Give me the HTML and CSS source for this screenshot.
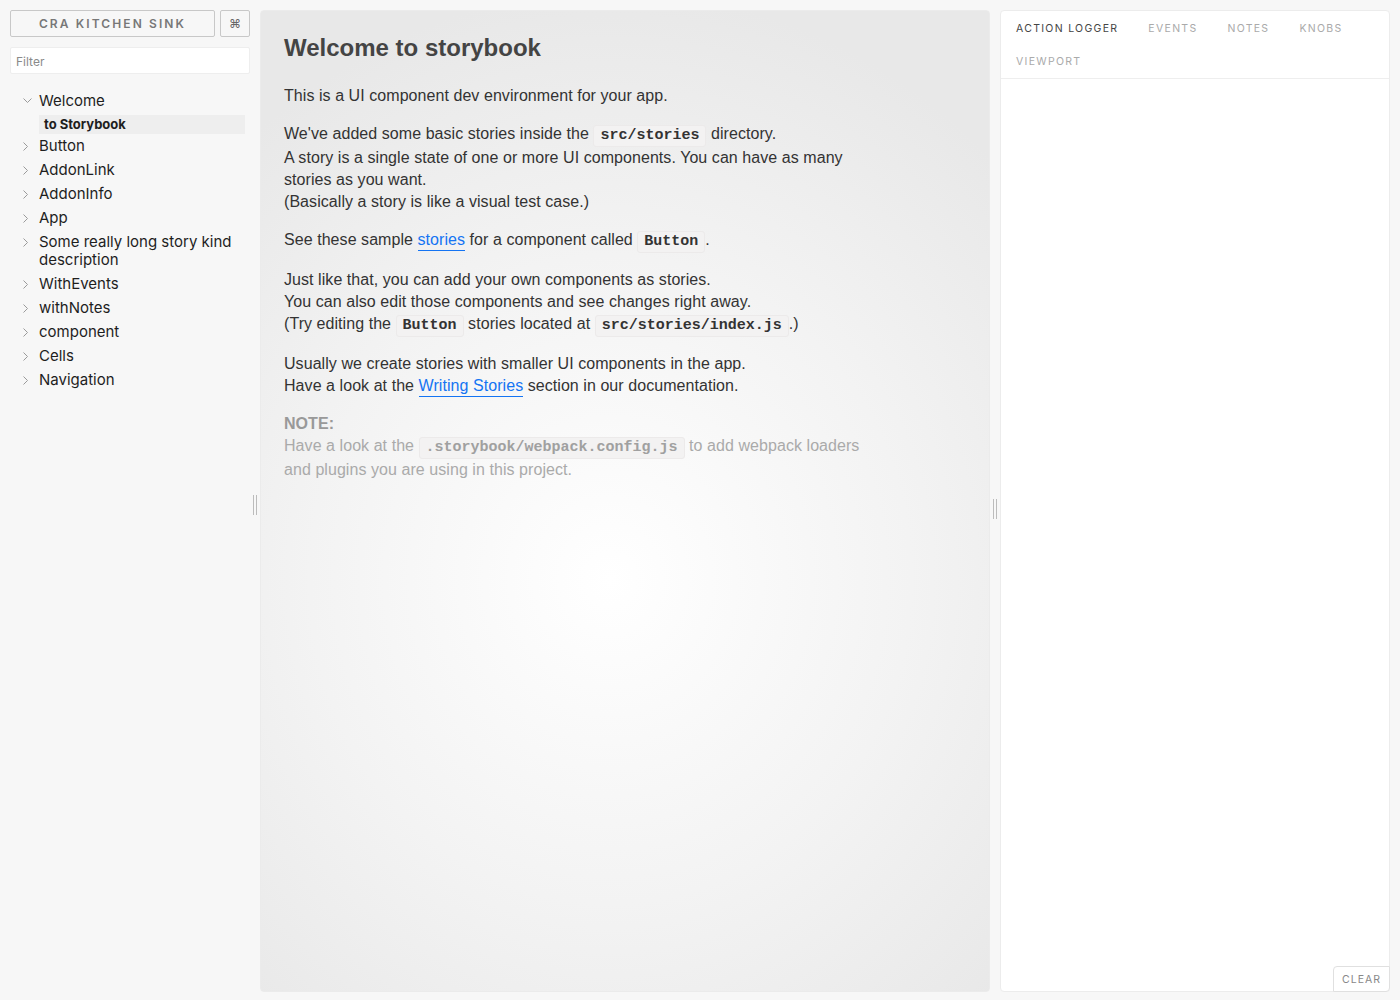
FILE: index.html
```html
<!DOCTYPE html>
<html>
<head>
<meta charset="utf-8">
<title>Storybook</title>
<link rel="stylesheet" href="styles.css">
</head>
<body>
<div class="app">
  <aside class="sidebar">
    <div class="header">
      <button class="brand">CRA KITCHEN SINK</button>
      <button class="shortcut">⌘</button>
    </div>
    <input class="filter" type="text" placeholder="Filter">
    <ul class="tree">
      <li class="kind">
        <div class="row"><span class="chev"><svg width="9" height="6" viewBox="0 0 9 6"><polyline points="0.5,0.5 4.5,4.5 8.5,0.5" fill="none" stroke="#9a9a9a" stroke-width="1"/></svg></span><span class="label">Welcome</span></div>
        <div class="story selected">to Storybook</div>
      </li>
      <li class="kind"><div class="row"><span class="chev"><svg width="6" height="9" viewBox="0 0 6 9"><polyline points="0.5,0.5 4.5,4.5 0.5,8.5" fill="none" stroke="#9a9a9a" stroke-width="1"/></svg></span><span class="label">Button</span></div></li>
      <li class="kind"><div class="row"><span class="chev"><svg width="6" height="9" viewBox="0 0 6 9"><polyline points="0.5,0.5 4.5,4.5 0.5,8.5" fill="none" stroke="#9a9a9a" stroke-width="1"/></svg></span><span class="label">AddonLink</span></div></li>
      <li class="kind"><div class="row"><span class="chev"><svg width="6" height="9" viewBox="0 0 6 9"><polyline points="0.5,0.5 4.5,4.5 0.5,8.5" fill="none" stroke="#9a9a9a" stroke-width="1"/></svg></span><span class="label">AddonInfo</span></div></li>
      <li class="kind"><div class="row"><span class="chev"><svg width="6" height="9" viewBox="0 0 6 9"><polyline points="0.5,0.5 4.5,4.5 0.5,8.5" fill="none" stroke="#9a9a9a" stroke-width="1"/></svg></span><span class="label">App</span></div></li>
      <li class="kind"><div class="row"><span class="chev"><svg width="6" height="9" viewBox="0 0 6 9"><polyline points="0.5,0.5 4.5,4.5 0.5,8.5" fill="none" stroke="#9a9a9a" stroke-width="1"/></svg></span><span class="label">Some really long story kind description</span></div></li>
      <li class="kind"><div class="row"><span class="chev"><svg width="6" height="9" viewBox="0 0 6 9"><polyline points="0.5,0.5 4.5,4.5 0.5,8.5" fill="none" stroke="#9a9a9a" stroke-width="1"/></svg></span><span class="label">WithEvents</span></div></li>
      <li class="kind"><div class="row"><span class="chev"><svg width="6" height="9" viewBox="0 0 6 9"><polyline points="0.5,0.5 4.5,4.5 0.5,8.5" fill="none" stroke="#9a9a9a" stroke-width="1"/></svg></span><span class="label">withNotes</span></div></li>
      <li class="kind"><div class="row"><span class="chev"><svg width="6" height="9" viewBox="0 0 6 9"><polyline points="0.5,0.5 4.5,4.5 0.5,8.5" fill="none" stroke="#9a9a9a" stroke-width="1"/></svg></span><span class="label">component</span></div></li>
      <li class="kind"><div class="row"><span class="chev"><svg width="6" height="9" viewBox="0 0 6 9"><polyline points="0.5,0.5 4.5,4.5 0.5,8.5" fill="none" stroke="#9a9a9a" stroke-width="1"/></svg></span><span class="label">Cells</span></div></li>
      <li class="kind"><div class="row"><span class="chev"><svg width="6" height="9" viewBox="0 0 6 9"><polyline points="0.5,0.5 4.5,4.5 0.5,8.5" fill="none" stroke="#9a9a9a" stroke-width="1"/></svg></span><span class="label">Navigation</span></div></li>
    </ul>
  </aside>
  <div class="resizer resizer-left"><span class="grip"></span></div>
  <main class="preview">
    <div class="welcome">
      <h1>Welcome to storybook</h1>
      <p>This is a UI component dev environment for your app.</p>
      <p>We've added some basic stories inside the <code>src/stories</code> directory.<br>A story is a single state of one or more UI components. You can have as many stories as you want.<br>(Basically a story is like a visual test case.)</p>
      <p>See these sample <a href="#">stories</a> for a component called <code>Button</code>.</p>
      <p>Just like that, you can add your own components as stories.<br>You can also edit those components and see changes right away.<br>(Try editing the <code>Button</code> stories located at <code>src/stories/index.js</code>.)</p>
      <p>Usually we create stories with smaller UI components in the app.<br>Have a look at the <a href="#">Writing Stories</a> section in our documentation.</p>
      <p class="note"><b>NOTE:</b><br>Have a look at the <code>.storybook/webpack.config.js</code> to add webpack loaders and plugins you are using in this project.</p>
    </div>
  </main>
  <div class="resizer resizer-right"><span class="grip"></span></div>
  <section class="addons">
    <nav class="tabs">
      <span class="tab active">ACTION LOGGER</span>
      <span class="tab">EVENTS</span>
      <span class="tab">NOTES</span>
      <span class="tab">KNOBS</span>
      <span class="tab">VIEWPORT</span>
    </nav>
    <div class="addon-body"></div>
    <button class="clear">CLEAR</button>
  </section>
</div>
</body>
</html>
```
FILE: styles.css
```css
* { box-sizing: border-box; }
html, body { margin: 0; height: 100%; }
body {
  background: #f7f7f7;
  font-family: Inter, "Noto Sans", sans-serif;
  color: #1e1e1e;
}
.app {
  display: flex;
  height: 1000px;
  padding: 10px 10px 8px 0;
}
.sidebar {
  width: 250px;
  flex: none;
  padding-left: 10px;
}
.header {
  display: flex;
  gap: 5px;
}
.brand, .shortcut {
  height: 27px;
  border: 1px solid #c8c8c8;
  border-radius: 2px;
  background: #f7f7f7;
  color: #777;
  font-family: Inter, sans-serif;
  padding: 0;
}
.brand {
  flex: 1;
  font-size: 12px;
  font-weight: 600;
  letter-spacing: 2.1px;
}
.shortcut {
  width: 30px;
  font-size: 12px;
  color: #666;
}
.filter {
  display: block;
  width: 100%;
  height: 27px;
  margin-top: 10px;
  border: 1px solid #eee;
  border-radius: 2px;
  background: #fff;
  padding: 2px 5px 0;
  font-family: Inter, sans-serif;
  font-size: 12px;
  color: #444;
}
.filter::placeholder { color: #8a8a8a; }
.tree {
  list-style: none;
  margin: 15px 0 0;
  padding: 0 5px 0 12px;
}
.row {
  display: flex;
  align-items: flex-start;
  padding: 3px 0;
  font-size: 15px;
  line-height: 18px;
}
.chev {
  width: 17px;
  flex: none;
  height: 18px;
  display: flex;
  align-items: center;
  padding-left: 1px;
}
.story {
  margin: 2px 0 0 17px;
  height: 19px;
  line-height: 19px;
  padding-left: 5px;
  font-size: 13px;
  font-weight: 700;
}
.story.selected { background: #eeeeee; }

.resizer {
  width: 10px;
  flex: none;
  display: flex;
  align-items: center;
  justify-content: center;
}
.grip {
  width: 4px;
  height: 20px;
  border-left: 1px solid #bcbcbc;
  border-right: 1px solid #bcbcbc;
}
.resizer-left .grip { margin-top: 8px; }
.resizer-right .grip { margin-top: 16px; }

.preview {
  width: 730px;
  flex: none;
  border-radius: 4px;
  background: radial-gradient(ellipse 75% 60% at 48% 58%, #ffffff 0%, #f3f3f3 55%, #e8e8e8 100%);
  border: 1px solid #ebebeb;
  overflow: hidden;
}
.welcome {
  padding: 23px 23px;
  max-width: 624px;
  font-family: "Liberation Sans", Arial, sans-serif;
  font-size: 16px;
  letter-spacing: 0.06px;
  line-height: 22px;
  color: #333;
}
.welcome h1 {
  margin: 0 0 23px;
  font-size: 24px;
  line-height: 28px;
  color: #444;
  font-weight: 700;
  letter-spacing: 0;
}
.welcome p { margin: 0 0 16px; }
.welcome code {
  display: inline-block;
  font-family: "Liberation Mono", "Courier New", monospace;
  font-weight: 700;
  font-size: 15px;
  line-height: 18px;
  letter-spacing: 0;
  background: #f3f2f2;
  border: 1px solid #eceaea;
  border-radius: 3px;
  padding: 1px 6px;
  color: #333;
}
.welcome a {
  color: #1474f3;
  text-decoration: none;
  border-bottom: 1px solid #1474f3;
  padding-bottom: 2px;
}
.welcome .note { color: #aaa; }
.welcome .note b { color: #999; }
.welcome .note code { color: #a0a0a0; font-weight: 700; }

.addons {
  position: relative;
  flex: 1;
  background: #fff;
  border: 1px solid #ececec;
  border-radius: 4px;
  display: flex;
  flex-direction: column;
}
.tabs {
  display: flex;
  flex-wrap: wrap;
  border-bottom: 1px solid #eee;
  padding-top: 1px;
}
.tab {
  padding: 0 15px;
  height: 33px;
  line-height: 34px;
  font-family: Inter, sans-serif;
  font-size: 10.5px;
  letter-spacing: 1.3px;
  color: #aaa;
}
.tab.active { color: #444; }
.addon-body { flex: 1; }
.clear {
  position: absolute;
  right: -1px;
  bottom: -1px;
  width: 57px;
  height: 26px;
  border: 1px solid #e0e0e0;
  border-radius: 4px 0 4px 0;
  background: #fff;
  font-family: Inter, sans-serif;
  font-size: 10.5px;
  letter-spacing: 1px;
  color: #888;
  padding: 0;
}
```
